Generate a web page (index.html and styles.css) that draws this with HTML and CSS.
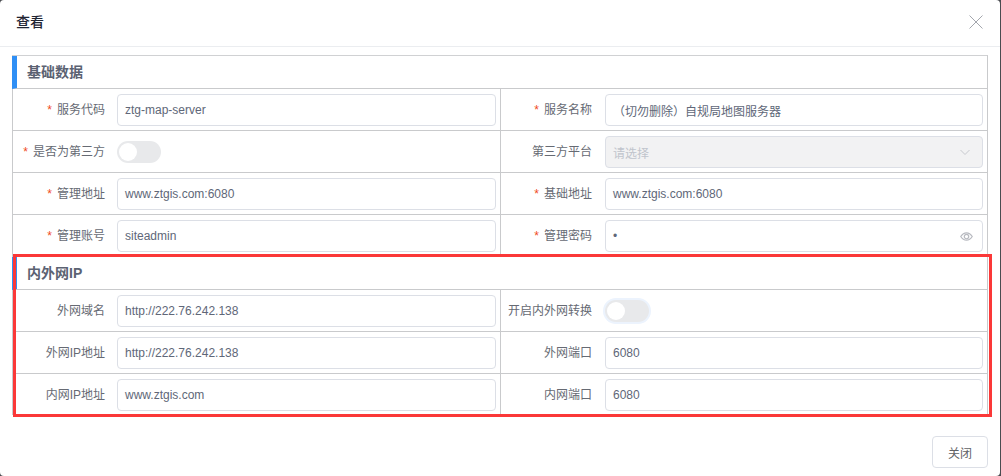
FILE: index.html
```html
<!DOCTYPE html>
<html lang="zh">
<head>
<meta charset="utf-8">
<title>查看</title>
<link rel="stylesheet" href="styles.css">
</head>
<body>
<div class="dialog">
  <header class="dialog-header">
    <h1 class="dialog-title">查看</h1>
    <svg class="close-icon" viewBox="0 0 14 14" width="14" height="14"><path d="M.5.5l13 13M13.5.5l-13 13" fill="none" stroke="#a3a6ad" stroke-width="1"/></svg>
  </header>
  <div class="dialog-body">
    <section class="sheet">
      <h2 class="section-title">基础数据</h2>
      <div class="row">
        <div class="cell"><label class="label"><i class="req">*</i>服务代码</label><div class="input">ztg-map-server</div></div>
        <div class="cell"><label class="label"><i class="req">*</i>服务名称</label><div class="input">（切勿删除）自规局地图服务器</div></div>
      </div>
      <div class="row">
        <div class="cell"><label class="label"><i class="req">*</i>是否为第三方</label><div class="switch"><span class="knob"></span></div></div>
        <div class="cell"><label class="label">第三方平台</label><div class="input select"><span>请选择</span><svg viewBox="0 0 12 12" width="12" height="12"><path d="M1.5 4l4.5 4.5L10.500 4" fill="none" stroke="#c8cacf" stroke-width="1"/></svg></div></div>
      </div>
      <div class="row">
        <div class="cell"><label class="label"><i class="req">*</i>管理地址</label><div class="input">www.ztgis.com:6080</div></div>
        <div class="cell"><label class="label"><i class="req">*</i>基础地址</label><div class="input">www.ztgis.com:6080</div></div>
      </div>
      <div class="row">
        <div class="cell"><label class="label"><i class="req">*</i>管理账号</label><div class="input">siteadmin</div></div>
        <div class="cell"><label class="label"><i class="req">*</i>管理密码</label><div class="input password"><span>•</span><svg viewBox="0 0 14 14" width="13" height="13"><path d="M.8 7C2.500 4.300 4.600 3 7 3s4.500 1.300 6.200 4C11.500 9.700 9.400 11 7 11S2.500 9.700.8 7z" fill="none" stroke="#b8bac0" stroke-width="1.300"/><circle cx="7" cy="7" r="2.400" fill="none" stroke="#b8bac0" stroke-width="1.300"/></svg></div></div>
      </div>
      <h2 class="section-title second">内外网IP</h2>
      <div class="row">
        <div class="cell"><label class="label">外网域名</label><div class="input">http://222.76.242.138</div></div>
        <div class="cell"><label class="label">开启内外网转换</label><div class="switch focus"><span class="knob"></span></div></div>
      </div>
      <div class="row">
        <div class="cell"><label class="label">外网IP地址</label><div class="input">http://222.76.242.138</div></div>
        <div class="cell"><label class="label">外网端口</label><div class="input">6080</div></div>
      </div>
      <div class="row">
        <div class="cell"><label class="label">内网IP地址</label><div class="input">www.ztgis.com</div></div>
        <div class="cell"><label class="label">内网端口</label><div class="input">6080</div></div>
      </div>
    </section>
    <div class="highlight"></div>
  </div>
  <footer class="dialog-footer"><button class="btn">关闭</button></footer>
</div>
</body>
</html>
```
FILE: styles.css
```css
* { box-sizing: border-box; }
html, body { margin: 0; height: 100%; }
body {
  background: #4a4c50;
  font-family: "Liberation Sans", "Noto Sans CJK SC", sans-serif;
  font-size: 12px;
  color: #606266;
  overflow: hidden;
}
.dialog {
  width: 1000px;
  height: 476px;
  background: #fff;
  border-radius: 4px;
}
.dialog-header {
  height: 47px;
  padding: 0 17px 4px 16px;
  border-bottom: 1px solid #ebedf0;
  display: flex;
  align-items: center;
  justify-content: space-between;
}
.dialog-title { margin: 0; font-size: 14px; font-weight: 500; color: #1f2533; }
.close-icon { position: relative; top: 1px; }
.dialog-body { position: relative; padding: 8px 12px 0; }
.sheet { width: 976px; border: 1px solid #c9cacc; border-bottom: 0; border-top-color: #d0d1d3; }
.section-title {
  box-sizing: content-box;
  height: 32px;
  margin: 0 0 0 -1px;
  padding-left: 10px;
  border-left: 5px solid #2f8ff5;
  border-bottom: 1px solid #c9cacc;
  line-height: 32px;
  font-size: 14px;
  font-weight: 700;
  color: #5b6272;
}
.row {
  display: grid;
  grid-template-columns: 487px 1fr;
  height: 42px;
  border-bottom: 1px solid #c9cacc;
}
.row:last-child { height: 41px; border-bottom: 0; }
.cell {
  display: flex;
  align-items: center;
  padding: 5px 0 4px;
}
.cell + .cell { border-left: 1px solid #c9cacc; }
.label {
  width: 92px;
  flex: none;
  margin-right: 12px;
  text-align: right;
  white-space: nowrap;
  color: #666a73;
  position: relative;
  top: -2px;
}
.cell + .cell .label { width: 91px; margin-right: 13px; }
.req { color: #f04a1c; font-style: normal; margin-right: 5px; }
.input {
  flex: none;
  width: 379px;
  height: 32px;
  padding: 0 7px;
  border: 1px solid #dcdfe6;
  border-radius: 4px;
  background: #fff;
  font-size: 12px;
  color: #606778;
  display: flex;
  align-items: center;
  justify-content: space-between;
}
.cell + .cell .input { width: 378px; }
.select { background: #f2f2f3; color: #c0c4cc; }
.select svg { margin-right: 4px; }
.password svg { margin-right: 2px; }
.switch {
  position: relative;
  width: 44px;
  height: 22px;
  border-radius: 11px;
  background: #e8e9eb;
}
.switch.focus { box-shadow: 0 0 0 2px #ecf3fd; }
.knob {
  position: absolute;
  left: 2px;
  top: 2px;
  width: 18px;
  height: 18px;
  border-radius: 50%;
  background: #fff;
}
.highlight {
  position: absolute;
  left: 13px;
  top: 207px;
  width: 979px;
  height: 163px;
  border: 3px solid #fb3838;
  pointer-events: none;
}
.dialog-footer {
  display: flex;
  justify-content: flex-end;
  padding: 21px 12px 0 0;
}
.btn {
  width: 56px;
  height: 32px;
  padding: 0;
  border: 1px solid #dcdfe6;
  border-radius: 4px;
  background: #fff;
  font: inherit;
  color: #606266;
}
```
